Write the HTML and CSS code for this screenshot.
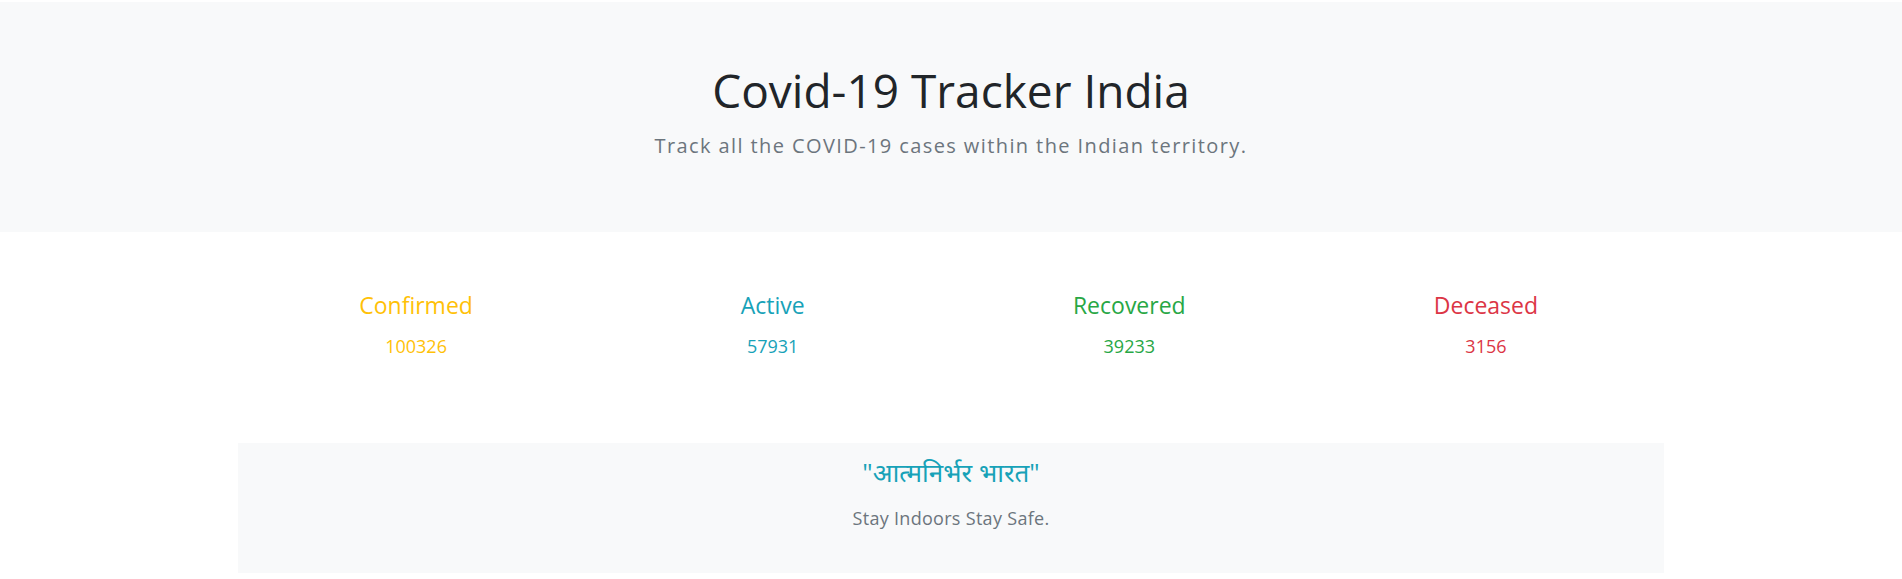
FILE: index.html
```html
<!DOCTYPE html>
<html lang="en">
<head>
<meta charset="utf-8">
<title>Covid-19 Tracker India</title>
<link rel="stylesheet" href="styles.css">
</head>
<body>
  <header class="hero">
    <h1 class="hero-title">Covid-19 Tracker India</h1>
    <p class="hero-lead">Track all the COVID-19 cases within the Indian territory.</p>
  </header>
  <main class="container">
    <section class="stats">
      <div class="stat">
        <h4 class="stat-label confirmed">Confirmed</h4>
        <p class="stat-value confirmed">100326</p>
      </div>
      <div class="stat">
        <h4 class="stat-label active">Active</h4>
        <p class="stat-value active">57931</p>
      </div>
      <div class="stat">
        <h4 class="stat-label recovered">Recovered</h4>
        <p class="stat-value recovered">39233</p>
      </div>
      <div class="stat">
        <h4 class="stat-label deceased">Deceased</h4>
        <p class="stat-value deceased">3156</p>
      </div>
    </section>
    <section class="motto">
      <h3 class="motto-title">"आत्मनिर्भर भारत"</h3>
      <p class="motto-text">Stay Indoors Stay Safe.</p>
    </section>
  </main>
</body>
</html>
```
FILE: styles.css
```css
html::-webkit-scrollbar {
  width: 3px;
}
html::-webkit-scrollbar-track {
  background: #f1f1f1;
}
html::-webkit-scrollbar-thumb {
  background: #b5b5b5;
}

body {
  margin: 0;
  padding: 2px 0 140px;
  font-family: "Open Sans", "Noto Sans", "Noto Sans Devanagari", sans-serif;
  color: #212529;
  background: #fff;
}

.hero {
  background: #f8f9fa;
  height: 230px;
  box-sizing: border-box;
  padding-top: 61px;
  text-align: center;
}

.hero-title {
  margin: 0;
  font-size: 46px;
  font-weight: 400;
  line-height: 1.2;
  color: #212529;
}

.hero-lead {
  margin: 13px 0 0;
  font-size: 20px;
  line-height: 1.5;
  letter-spacing: 1.4px;
  color: #6c757d;
}

.container {
  width: 75%;
  margin: 0 auto;
}

.stats {
  display: grid;
  grid-template-columns: repeat(4, 1fr);
  padding-top: 60px;
  text-align: center;
}

.stat-label {
  margin: 0;
  font-size: 23px;
  font-weight: 400;
  line-height: 1.2;
}

.stat-value {
  margin: 13px 0 0;
  font-size: 18px;
  line-height: 1.5;
}

.confirmed { color: #ffc107; }
.active { color: #17a2b8; }
.recovered { color: #28a745; }
.deceased { color: #dc3545; }

.motto {
  margin-top: 83px;
  height: 130px;
  box-sizing: border-box;
  background: #f8f9fa;
  text-align: center;
  padding-top: 11px;
}

.motto-title {
  margin: 0;
  font-size: 26px;
  font-weight: 400;
  line-height: 1.4;
  color: #17a2b8;
}

.motto-text {
  margin: 15px 0 0;
  font-size: 18px;
  line-height: 1.5;
  letter-spacing: 0.3px;
  color: #6c757d;
}
```
